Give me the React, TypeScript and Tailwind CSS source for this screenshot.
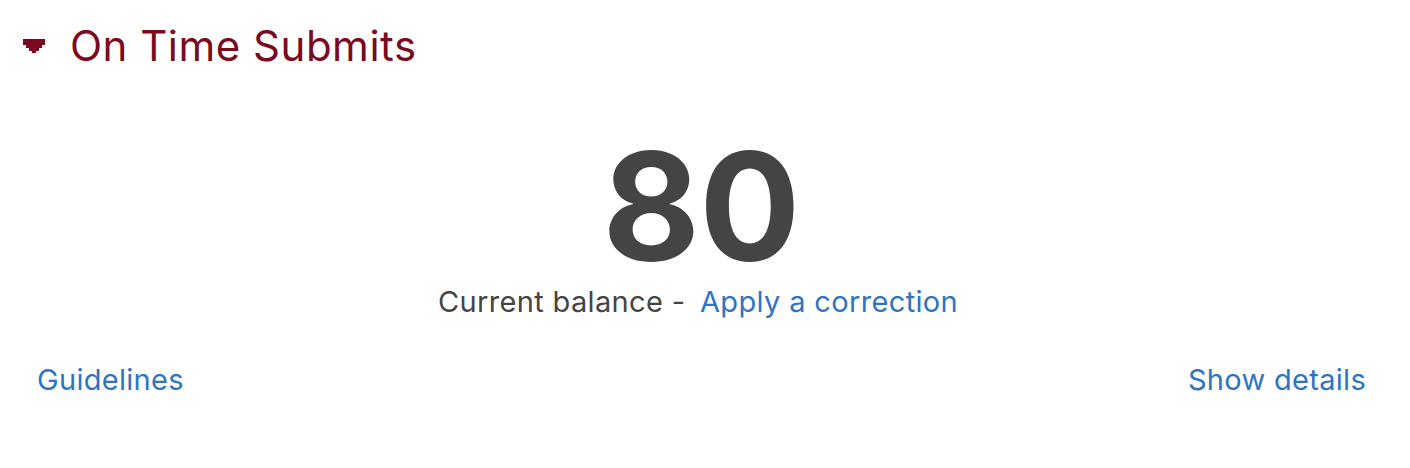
import React from "react";

function Caret() {
  return (
    <svg width="22" height="14" viewBox="0 0 22 14" className="block">
      <path
        d="M0 0H22V6H19V9H16V12H13V14H9V12H6V9H3V6H0Z"
        fill="#7a0b1f"
      />
    </svg>
  );
}

export default function App() {
  return (
    <div
      className="w-[1410px] h-[468px] bg-white"
      style={{ fontFamily: "Inter, 'Noto Sans', sans-serif" }}
    >
      <div className="flex items-center pl-[23px] pt-[20px] h-[52px] box-content">
        <Caret />
        <h1 className="ml-[25px] text-[42px] leading-[52px] text-[#7a0b1f] font-normal tracking-[0.5px]">
          On Time Submits
        </h1>
      </div>
      <div className="flex flex-col items-center mt-[60px] pr-[8px]">
        <div className="text-[150px] leading-[150px] font-bold text-[#444444] tracking-[-1px]">
          80
        </div>
        <div className="mt-[2px] mr-[6px] text-[29px] leading-[36px] text-[#444444] tracking-[0.35px]">
          Current balance -{" "}
          <a className="text-[#2f74c0] ml-[6px] cursor-pointer">Apply a correction</a>
        </div>
      </div>
      <div className="flex justify-between pl-[37px] pr-[44px] mt-[42px] text-[29px] leading-[36px] text-[#2f74c0] tracking-[0.3px]">
        <a className="cursor-pointer">Guidelines</a>
        <a className="cursor-pointer">Show details</a>
      </div>
    </div>
  );
}
